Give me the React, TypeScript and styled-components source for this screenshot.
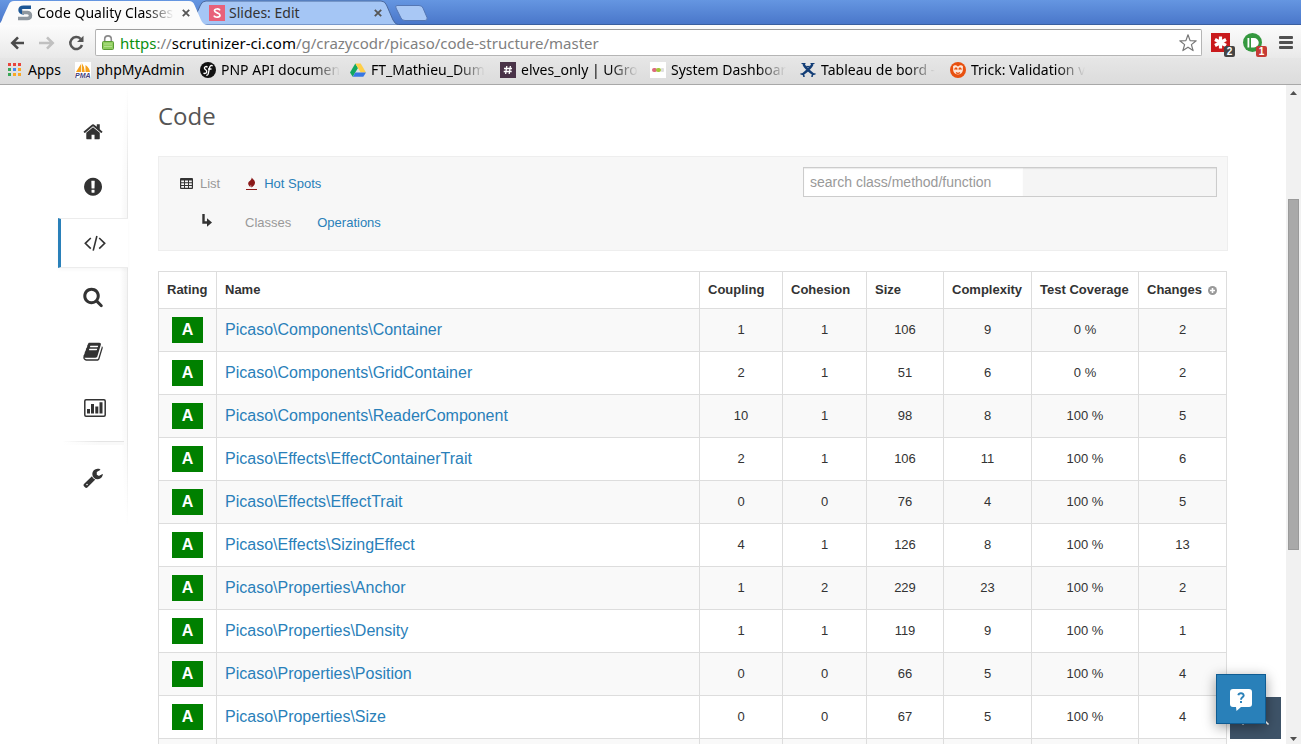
import React from 'react';
import styled, { createGlobalStyle, css } from 'styled-components';

const UI_FONT = '"Noto Sans", "Open Sans", sans-serif';
const BODY_FONT = '"Liberation Sans", Arial, sans-serif';

const GlobalStyle = createGlobalStyle`
  *, *::before, *::after { box-sizing: border-box; }
  body { margin: 0; background: #fff; color: #333; font: 13px/20px ${BODY_FONT}; overflow: hidden; }
  button, input { font: inherit; color: inherit; }
  button { padding: 0; border: 0; background: none; cursor: pointer; }
  a { text-decoration: none; color: inherit; }
  svg { display: block; flex: none; }
`;

/* ---------- browser window ---------- */

const Window = styled.div`
  display: flex;
  flex-direction: column;
  height: 100vh;
`;

const TabStrip = styled.div`
  display: flex;
  height: 25px;
  padding-left: 4px;
  background: linear-gradient(#6596e1, #4a77ca);
  border-bottom: 1px solid #3a5f9f;
  flex: none;
`;

const Tab = styled.div<{ $active?: boolean }>`
  position: relative;
  z-index: ${(p) => (p.$active ? 2 : 1)};
  display: flex;
  align-items: center;
  gap: 4px;
  width: 192px;
  height: 25px;
  padding: 0 2px 0 13px;
  font: 14px/24px ${UI_FONT};
  color: ${(p) => (p.$active ? '#000' : '#333')};
`;

const TabShape = styled.svg`
  position: absolute;
  z-index: -1;
  left: -8px;
  top: 0;
`;

const fade = css`
  overflow: hidden;
  white-space: nowrap;
  mask-image: linear-gradient(90deg, #000 calc(100% - 28px), transparent);
`;

const TabTitle = styled.span<{ $fade?: boolean }>`
  flex: 1;
  min-width: 0;
  white-space: nowrap;
  ${(p) => p.$fade && fade}
`;

const CloseButton = styled.button`
  display: grid;
  place-items: center;
  width: 16px;
  height: 16px;
  color: #555;
`;

const NewTab = styled.button`
  margin: 5px 0 0 6px;
  height: 16px;
`;

const Toolbar = styled.div`
  display: flex;
  align-items: center;
  height: 33px;
  padding: 2px 8px 0;
  background: linear-gradient(#fcfcfc, #e9e9e9);
  flex: none;
`;

const ToolButton = styled.button`
  display: grid;
  place-items: center;
  width: 29px;
  height: 24px;
  justify-items: start;
`;

const AddressBar = styled.div`
  display: flex;
  align-items: center;
  flex: 1;
  min-width: 0;
  height: 27px;
  padding: 0 4px 0 6px;
  gap: 6px;
  background: #fff;
  border: 1px solid #b5b5b5;
  border-top-color: #9c9c9c;
  border-radius: 2px;
`;

const Url = styled.div`
  flex: 1;
  min-width: 0;
  overflow: hidden;
  white-space: nowrap;
  font: 15px/24px ${UI_FONT};
  color: #808080;
  b { font-weight: normal; color: #000; }
  i { font-style: normal; color: #0a9010; }
`;

const Extensions = styled.div`
  display: flex;
  align-items: center;
  gap: 12px;
  padding-left: 9px;
  svg { overflow: visible; }
`;

const Bookmarks = styled.nav`
  display: flex;
  height: 27px;
  padding-left: 7px;
  background: linear-gradient(#e6e6e6, #dcdcdc);
  border-bottom: 1px solid #a8a8a8;
  flex: none;
`;

const Bookmark = styled.a<{ $width: number }>`
  display: flex;
  align-items: center;
  gap: 5px;
  width: ${(p) => p.$width}px;
  padding: 0 8px 3px 0;
  font: 14px/22px ${UI_FONT};
  color: #000;
`;

const BookmarkLabel = styled.span<{ $fade?: boolean }>`
  white-space: nowrap;
  ${(p) => p.$fade && fade}
`;

const Viewport = styled.div`
  position: relative;
  display: flex;
  flex: 1;
  min-height: 0;
`;

const Scroller = styled.div`
  flex: 1;
  min-width: 0;
  overflow: hidden;
`;

const ScrollTrack = styled.div`
  display: flex;
  flex-direction: column;
  align-items: center;
  width: 15px;
  padding: 6px 0 3px;
  background: #f1f1f1;
`;

const ScrollThumb = styled.div`
  width: 11px;
  height: 54%;
  margin: 104px 0 auto;
  background: #a9a9a9;
  border: 1px solid #9a9a9a;
`;

/* ---------- page ---------- */

const Page = styled.div`
  display: flex;
  max-width: 1170px;
  margin: 0 auto;
  align-items: flex-start;
`;

const SideNav = styled.nav`
  display: flex;
  flex-direction: column;
  gap: 5px;
  width: 70px;
  height: 440px;
  padding-top: 23px;
  flex: none;
  border-right: 1px solid;
  border-image: linear-gradient(transparent, #e8e8e8 20%, #e8e8e8 80%, transparent) 1;
  background: radial-gradient(ellipse 7px 50% at 100% 50%, #f3f3f3, #fff);
`;

const NavItem = styled.a<{ $active?: boolean }>`
  display: flex;
  align-items: center;
  height: 50px;
  padding-left: 25px;
  color: #333;
  ${(p) =>
    p.$active &&
    css`
      margin-right: -1px;
      padding-left: 23px;
      background: #fff;
      border: solid #ececec;
      border-width: 1px 0;
      border-left: 3px solid #2a80b9;
      box-shadow: 0 2px 4px rgba(0, 0, 0, 0.03);
    `}
`;

const NavDivider = styled.hr`
  width: 62px;
  height: 4px;
  margin: 3px 0 4px 4px;
  border: 0;
  background:
    linear-gradient(90deg, transparent, #e4e4e4 60%) top / 100% 1px no-repeat,
    linear-gradient(90deg, transparent, #f9f9f9 60%);
`;

const Main = styled.main`
  flex: 1;
  min-width: 0;
  padding: 16px 0 0 30px;
`;

const Title = styled.h1`
  margin: 0 0 25px;
  font: 24px/30px "Open Sans", sans-serif;
  color: #555;
`;

const Panel = styled.section`
  display: flex;
  justify-content: space-between;
  align-items: flex-start;
  margin-bottom: 20px;
  padding: 10px;
  background: #f7f7f7;
  border: 1px solid #eee;
`;

const Filters = styled.div`
  display: flex;
  flex-direction: column;
  gap: 19px;
  padding: 7px 0 7px 11px;
`;

const FilterRow = styled.div<{ $sub?: boolean }>`
  display: flex;
  align-items: center;
  gap: 26px;
  padding-left: ${(p) => (p.$sub ? 22 : 0)}px;
  svg:first-child { margin-right: ${(p) => (p.$sub ? 6 : 0)}px; }
`;

const FilterLink = styled.a<{ $current?: boolean }>`
  display: flex;
  align-items: center;
  gap: 7px;
  color: ${(p) => (p.$current ? '#999' : '#2980b9')};
`;

const SearchBox = styled.form`
  display: flex;
  width: 414px;
  height: 30px;
  border: 1px solid #ccc;
  box-shadow: inset 0 1px 1px rgba(0, 0, 0, 0.08);
  background: #f5f5f5;
`;

const SearchInput = styled.input`
  width: 219px;
  padding: 0 6px;
  border: 0;
  outline: 0;
  background: #fff;
  box-shadow: inset 0 1px 1px rgba(0, 0, 0, 0.08);
  font-size: 14px;
  &::placeholder { color: #999; opacity: 1; }
`;

const TableWrap = styled.div`
  padding-right: 1px;
`;

const Table = styled.table`
  width: 100%;
  table-layout: fixed;
  border-collapse: collapse;
`;

const Head = styled.th`
  height: 37px;
  padding: 0 8px;
  border: 1px solid #ddd;
  text-align: left;
  white-space: nowrap;
`;

const HeadSort = styled.span`
  display: flex;
  align-items: center;
  gap: 6px;
`;

const Row = styled.tr`
  &:nth-child(odd) { background: #f9f9f9; }
`;

const Cell = styled.td<{ $left?: boolean }>`
  height: 43px;
  padding: 0 8px;
  border: 1px solid #ddd;
  text-align: ${(p) => (p.$left ? 'left' : 'center')};
`;

const Grade = styled.span`
  display: inline-block;
  width: 31px;
  background: #008000;
  color: #fff;
  font-weight: bold;
  font-size: 16px;
  line-height: 26px;
  vertical-align: middle;
`;

const ClassLink = styled.a`
  font-size: 16px;
  color: #2980b9;
`;

const ToTop = styled.button`
  position: absolute;
  right: 20px;
  bottom: 5px;
  width: 51px;
  height: 42px;
  background: #3e5368;
`;

const HelpButton = styled.button`
  position: absolute;
  right: 35px;
  bottom: 20px;
  display: grid;
  place-items: center;
  width: 50px;
  height: 50px;
  background: #2980b9;
  border: 1px solid #0f5c92;
  box-shadow: 0 3px 12px rgba(0, 0, 0, 0.4);
`;

/* ---------- icons ---------- */

const paths = {
  home: 'M1472 992v480q0 26-19 45t-45 19h-384v-384h-256v384h-384q-26 0-45-19t-19-45v-480q0-1 .5-3t.5-3l575-474 575 474q1 2 1 6zm223-69l-62 74q-8 9-21 11h-3q-13 0-21-7l-692-577-692 577q-12 8-24 7-13-2-21-11l-62-74q-8-10-7-23.5t11-21.5l719-599q32-26 76-26t76 26l244 204v-195q0-14 9-23t23-9h192q14 0 23 9t9 23v408l219 182q10 8 11 21.5t-7 23.5z',
  alert: 'M896 128q209 0 385.5 103t279.5 279.5 103 385.5-103 385.5-279.5 279.5-385.5 103-385.5-103-279.5-279.5-103-385.5 103-385.5 279.5-279.5 385.5-103zm128 1247v-190q0-14-9-23.5t-22-9.5h-192q-13 0-23 10t-10 23v190q0 13 10 23t23 10h192q13 0 22-9.5t9-23.5zm-2-344l18-621q0-12-10-18-10-8-24-8h-220q-14 0-24 8-10 6-10 18l17 621q0 10 10 17.5t24 7.5h185q14 0 23.5-7.5t10.5-17.5z',
  search: 'M1216 832q0-185-131.5-316.5t-316.5-131.5-316.5 131.5-131.5 316.5 131.5 316.5 316.5 131.5 316.5-131.5 131.5-316.5zm512 832q0 52-38 90t-90 38q-54 0-90-38l-343-342q-179 124-399 124-143 0-273.5-55.5t-225-150-150-225-55.5-273.5 55.5-273.5 150-225 225-150 273.5-55.5 273.5 55.5 225 150 150 225 55.5 273.5q0 220-124 399l343 343q37 37 37 90z',
  book: 'M1703 478q40 57 18 129l-275 906q-19 64-76.5 107.5t-122.5 43.5h-923q-77 0-148.5-53.5t-99.5-131.5q-24-67-2-127 0-4 3-27t4-37q1-8-3-21.5t-3-19.5q2-11 8-21t16.5-23.5 16.5-23.5q23-38 45-91.5t30-91.5q3-10 .5-30t-.5-28q3-11 17-28t17-23q21-36 42-92t25-90q1-9-2.500-32t.5-28q4-13 22-30.5t22-22.5q19-26 42.5-84.5t27.5-96.5q1-8-3-25.5t-2-26.5q2-8 9-18t18-23 17-21q8-12 16.5-30.5t15-35 16-36 19.5-32 26.5-23.5 36-11.5 47.5 5.5l-1 3q38-9 51-9h761q74 0 114 56t18 130l-274 906q-36 119-71.5 153.5t-128.5 34.5h-869q-27 0-38 15-11 16-1 43 24 70 144 70h923q29 0 56-15.5t35-41.5l300-987q7-22 5-57 38 15 59 43zm-1064 2q-4 13 2 22.5t20 9.5h608q13 0 25.5-9.5t16.5-22.5l21-64q4-13-2-22.5t-20-9.5h-608q-13 0-25.5 9.5t-16.5 22.5zm-83 256q-4 13 2 22.5t20 9.5h608q13 0 25.5-9.5t16.5-22.5l21-64q4-13-2-22.5t-20-9.5h-608q-13 0-25.5 9.5t-16.5 22.5z',
  wrench: 'M448 1472q0-26-19-45t-45-19-45 19-19 45 19 45 45 19 45-19 19-45zm644-420l-682 682q-37 37-90 37-52 0-91-37l-106-108q-38-36-38-90 0-53 38-91l681-681q39 98 114.5 173.5t173.5 114.5zm634-435q0 39-23 106-47 134-164.5 217.5t-258.5 83.5q-185 0-316.5-131.5t-131.5-316.5 131.5-316.5 316.5-131.5q58 0 121.5 16.5t107.5 46.5q16 11 16 28t-16 28l-293 169v224l193 107q5-3 79-48.5t135.5-81 70.5-35.5q15 0 23.5 10t8.5 25z',
};

const Glyph = ({ name }: { name: keyof typeof paths }) => (
  <svg width="22" height="22" viewBox="40 70 1877 1877" fill="currentColor">
    <path d={paths[name]} />
  </svg>
);

const CodeIcon = () => (
  <svg width="22" height="16" viewBox="0 0 22 16" fill="none" stroke="#333" strokeWidth="1.6">
    <path d="M6.8 3 1.3 8.300l5.500 5.300M15.200 3l5.500 5.300-5.500 5.300M12.900 1 9.200 15.600" />
  </svg>
);

const ChartIcon = () => (
  <svg width="23" height="18" viewBox="-1 0 23 18">
    <rect x=".8" y=".8" width="20.4" height="16.4" rx="1.2" fill="none" stroke="#333" strokeWidth="1.5" />
    <path d="M3 10h3v4.500H3zM7 5h3v9.500H7zM11.300 7.500h3v7h-3zM15.500 3.200h3v11.300h-3z" fill="#333" />
  </svg>
);

const ListIcon = () => (
  <svg width="13" height="12" viewBox="0 0 13 12">
    <rect width="13" height="11" rx="1" fill="#333" />
    <path d="M1.200 2.500h2.800v1.800H1.200zM5 2.500h3v1.800H5zM9 2.500h2.800v1.800H9zM1.200 5.200h2.800V7H1.200zM5 5.200h3V7H5zM9 5.200h2.800V7H9zM1.200 8h2.800v1.800H1.200zM5 8h3v1.800H5zM9 8h2.800v1.800H9z" fill="#f7f7f7" />
  </svg>
);

const FireIcon = () => (
  <svg width="11" height="14" viewBox="0 0 11 14" fill="#8b1a1a">
    <path d="M0 12h11v1H0zM5.700 0C5.800 1.800 9.200 3 9 5.800c0 2.200-1.700 3.800-4 4.700.5-1 .4-1.700-.2-2.400-.4.800-.3 1.400 0 2.200C3 9 2 7.800 2.200 6 2.500 4 6 3.300 5.700 0z" />
  </svg>
);

const SubArrow = () => (
  <svg width="11" height="19" viewBox="0 0 11 19">
    <path d="M1.500 0v8.500H6" fill="none" stroke="#333" strokeWidth="2.400" />
    <path d="M5 4.300 10 8.500 5 12.800z" fill="#333" />
  </svg>
);

const ArrowIcon = ({ color, flip }: { color: string; flip?: boolean }) => (
  <svg width="16" height="14" viewBox="0 0 16 14" fill="none" stroke={color} strokeWidth="2.600">
    <path d={flip ? 'M1 7h13M8 1.300 13.700 7 8 12.700' : 'M17 7H4M10 1.300 4.300 7 10 12.700'} />
  </svg>
);

const CloseIcon = () => (
  <svg width="8" height="8" viewBox="0 0 8 8" stroke="currentColor" strokeWidth="1.800">
    <path d="M.8.800l6.400 6.400M7.200.800.800 7.200" />
  </svg>
);

const icons: Record<string, React.ReactNode> = {
  apps: (
    <svg width="16" height="16" viewBox="0 0 16 16">
      <path d="M1 1h3v3H1zM6 1h3v3H6zM11 1h3v3h-3z" fill="#e8453c" />
      <path d="M1 6h3v3H1zM1 11h3v3H1z" fill="#3aa757" />
      <path d="M6 6h3v3H6z" fill="#4688f1" />
      <path d="M11 6h3v3h-3zM6 11h3v3H6zM11 11h3v3h-3z" fill="#f9a825" />
    </svg>
  ),
  pma: (
    <svg width="16" height="16" viewBox="0 0 16 16">
      <rect width="16" height="16" fill="#fff" />
      <path d="M1 10 6 2v8zM6.800 10V1q3 4 3 9zM10.500 10V3q4 3 4.500 7z" fill="#f5a11c" />
      <text x="0" y="16" fontFamily="Liberation Sans" fontWeight="bold" fontStyle="italic" fontSize="7" fill="#44407c">PMA</text>
    </svg>
  ),
  symfony: (
    <svg width="16" height="16" viewBox="0 0 16 16">
      <circle cx="8" cy="8" r="8" fill="#111" />
      <path d="M7.500 5.200C6 3.700 4 5 4.500 6.500s2.700 1.300 2.200 3.400-2.700 1.800-3 .8M12.500 4.200c-.8-1.400-2.600-.8-3 1.600l-1.200 5.700c-.3 1.600-1.300 2-2 1.400M8 7h3.500" stroke="#fff" strokeWidth="1.300" fill="none" />
    </svg>
  ),
  drive: (
    <svg width="16" height="16" viewBox="0 0 16 16">
      <path d="M5.300 1.500 0 10.500l2.700 4.300L8 6z" fill="#11a861" />
      <path d="M5.300 1.500h5.400l5.300 9h-5.300z" fill="#ffcf48" />
      <path d="M5.400 10.500H16l-2.700 4.300H2.700z" fill="#3777e3" />
    </svg>
  ),
  hash: (
    <svg width="16" height="16" viewBox="0 0 16 16">
      <rect width="16" height="16" fill="#4a3348" />
      <path d="M6.800 4 5.600 12M10.400 4l-1.200 8M4 6.500h8M3.700 9.500h8" stroke="#fff" strokeWidth="1.300" />
    </svg>
  ),
  system: (
    <svg width="16" height="16" viewBox="0 0 16 16">
      <rect width="16" height="16" fill="#fff" />
      <rect x="2" y="6" width="5" height="4" rx="2" fill="#dd6a7c" />
      <rect x="6" y="6" width="5" height="4" rx="2" fill="#a4c639" />
      <rect x="11" y="6" width="3" height="4" rx="1" fill="#dedede" />
    </svg>
  ),
  jira: (
    <svg width="16" height="16" viewBox="0 0 16 16" fill="none" stroke="#123d76">
      <path d="M3.500 2C5 6 9 9 13.500 12.500M12.500 2C11 6 7 9 2.500 12.500" strokeWidth="2.400" />
      <path d="M.5 12q3.500-.5 3.500 3M15.500 12q-3.500-.5-3.500 3" strokeWidth="1.600" />
      <path d="M1.500 1.500h4M10.500 1.500h4M6.500 4q1.500 1.500 3 0" strokeWidth="1.200" />
    </svg>
  ),
  trick: (
    <svg width="16" height="16" viewBox="0 0 16 16">
      <circle cx="8" cy="8" r="8" fill="#e8500f" />
      <path d="M3 4.500c2-2 3-1 5 0 2-1 3-2 5 0-.5 2 .5 4-1 6-1.500 2.500-6.500 2.500-8 0-1.500-2-.5-4-1-6z" fill="#fde6d8" />
      <path d="M4.500 7.500 6 6l1.300 1.500M8.700 7.500 10 6l1.500 1.500M6 10.500q2 1.800 4 0" stroke="#e8500f" strokeWidth="1.300" fill="none" />
    </svg>
  ),
};

/* ---------- data ---------- */

const bookmarks: [string, string, number][] = [
  ['apps', 'Apps', 68],
  ['pma', 'phpMyAdmin', 125],
  ['symfony', 'PNP API documen', 150],
  ['drive', 'FT_Mathieu_Dum', 150],
  ['hash', 'elves_only | UGro', 150],
  ['system', 'System Dashboar', 150],
  ['jira', 'Tableau de bord -', 150],
  ['trick', 'Trick: Validation v', 151],
];

const columns: [string, number | undefined][] = [
  ['Rating', 58],
  ['Name', undefined],
  ['Coupling', 83],
  ['Cohesion', 84],
  ['Size', 77],
  ['Complexity', 88],
  ['Test Coverage', 107],
  ['Changes', 88],
];

const rows: (string | number)[][] = [
  ['Picaso\\Components\\Container', 1, 1, 106, 9, '0 %', 2],
  ['Picaso\\Components\\GridContainer', 2, 1, 51, 6, '0 %', 2],
  ['Picaso\\Components\\ReaderComponent', 10, 1, 98, 8, '100 %', 5],
  ['Picaso\\Effects\\EffectContainerTrait', 2, 1, 106, 11, '100 %', 6],
  ['Picaso\\Effects\\EffectTrait', 0, 0, 76, 4, '100 %', 5],
  ['Picaso\\Effects\\SizingEffect', 4, 1, 126, 8, '100 %', 13],
  ['Picaso\\Properties\\Anchor', 1, 2, 229, 23, '100 %', 2],
  ['Picaso\\Properties\\Density', 1, 1, 119, 9, '100 %', 1],
  ['Picaso\\Properties\\Position', 0, 0, 66, 5, '100 %', 4],
  ['Picaso\\Properties\\Size', 0, 0, 67, 5, '100 %', 4],
];

const Col = styled.col<{ $width?: number }>`
  width: ${(p) => (p.$width ? `${p.$width}px` : 'auto')};
`;

/* ---------- sections ---------- */

const TabBackground = ({ active }: { active?: boolean }) => (
  <TabShape width="214" height="25" viewBox="0 0 214 25">
    <path
      d="M1 25C5 24 5.500 21 7 17L12.500 5Q14 1 18 1H193Q197 1 198.500 5L205 20Q207 24.500 211 25z"
      fill={active ? '#fbfbfb' : '#a5c6f5'}
      stroke={active ? 'none' : '#48689e'}
    />
  </TabShape>
);

const Browser = () => (
  <>
    <TabStrip>
      <Tab $active>
        <TabBackground active />
        <svg width="16" height="16" viewBox="0 0 16 16" fill="none" strokeWidth="3.400">
          <path d="M14 2.200H6.500Q3 2.200 3 5q0 2.500 4 3" stroke="#1d5796" />
          <path d="M5 7.500h5.500Q13.500 8 13.500 10.500q0 3-3.500 3H1" stroke="#8e979f" />
        </svg>
        <TabTitle $fade>Code Quality Classes</TabTitle>
        <CloseButton aria-label="Close tab"><CloseIcon /></CloseButton>
      </Tab>
      <Tab>
        <TabBackground />
        <svg width="16" height="16" viewBox="0 0 16 16">
          <rect width="16" height="16" fill="#e8617a" />
          <path d="M11 5.300C10 3.400 5.500 3.500 5.500 5.800S11 7.700 11 10.200 6 12.900 4.800 10.700" fill="none" stroke="#fff" strokeWidth="1.700" />
        </svg>
        <TabTitle>Slides: Edit</TabTitle>
        <CloseButton aria-label="Close tab"><CloseIcon /></CloseButton>
      </Tab>
      <NewTab aria-label="New tab">
        <svg width="34" height="16" viewBox="0 0 34 16">
          <path d="M3 .5h22q3 0 4 2.500l4 9.500q1 3-2 3H11q-3 0-4-2.500L2 3Q1 .5 3 .5z" fill="#a9c8f5" stroke="#5577b4" />
        </svg>
      </NewTab>
    </TabStrip>
    <Toolbar>
      <ToolButton aria-label="Back"><ArrowIcon color="#4a4a4a" /></ToolButton>
      <ToolButton aria-label="Forward">
        <svg width="18" height="14" viewBox="-2 0 18 14" fill="none" stroke="#c0c0c0" strokeWidth="2.600">
          <path d="M0 7h14M8 1.300 13.700 7 8 12.700" />
        </svg>
      </ToolButton>
      <ToolButton aria-label="Reload">
        <svg width="18" height="16" viewBox="-2 0 18 16">
          <path d="M12.600 3.800A6 6 0 1 0 14 10" fill="none" stroke="#555" strokeWidth="2.500" />
          <path d="M15.500.8V7H9z" fill="#555" />
        </svg>
      </ToolButton>
      <AddressBar>
        <svg width="12" height="15" viewBox="0 0 12 15">
          <path d="M2.700 7V4.200a3.300 3.300 0 0 1 6.600 0V7" fill="none" stroke="#8a8a8a" strokeWidth="1.600" />
          <rect x=".5" y="6.500" width="11" height="8" rx="1" fill="#8fce5f" stroke="#5a9a35" />
          <path d="M2 9h8M2 11.500h8" stroke="#b4e08e" />
        </svg>
        <Url><i>https</i>://<b>scrutinizer-ci.com</b>/g/crazycodr/picaso/code-structure/master</Url>
        <svg width="18" height="18" viewBox="0 0 18 18">
          <path d="m9 .8 2.100 5.800 6.100.2-4.800 3.800 1.700 6L9 13.200l-5.100 3.400 1.700-6L.8 6.800l6.100-.2z" fill="#fff" stroke="#777" strokeWidth="1.200" strokeLinejoin="round" />
        </svg>
      </AddressBar>
      <Extensions>
        <svg width="20" height="19" viewBox="0 0 20 19">
          <path d="M0 0h19v19H0z" fill="#c91a1c" />
          <path d="M9.500 3.500v12M4 6.500l11 6M15 6.500l-11 6" stroke="#fff" strokeWidth="3.200" />
          <rect x="13" y="13" width="11" height="11" rx="2" fill="#444" />
          <text x="18.500" y="22" textAnchor="middle" fontFamily="Liberation Sans" fontWeight="bold" fontSize="10" fill="#fff">2</text>
        </svg>
        <svg width="24" height="19" viewBox="0 0 24 19">
          <circle cx="9.500" cy="9.500" r="9.500" fill="#35983f" />
          <path d="M4.500 5v9.500h1.800V5zM8 5v9.500h3a4.700 4.700 0 0 0 0-9.500z" fill="#fff" />
          <rect x="13" y="13" width="11" height="11" rx="2" fill="#c63a35" />
          <text x="18.500" y="22" textAnchor="middle" fontFamily="Liberation Sans" fontWeight="bold" fontSize="10" fill="#fff">1</text>
        </svg>
        <svg width="14" height="13" viewBox="0 0 14 13" fill="#505050">
          <rect width="14" height="3" rx="1" /><rect y="5" width="14" height="3" rx="1" /><rect y="10" width="14" height="3" rx="1" />
        </svg>
      </Extensions>
    </Toolbar>
    <Bookmarks>
      {bookmarks.map(([icon, label, width], i) => (
        <Bookmark key={label} href="#" $width={width}>
          {icons[icon]}
          <BookmarkLabel $fade={i > 1}>{label}</BookmarkLabel>
        </Bookmark>
      ))}
    </Bookmarks>
  </>
);

const ClassTable = () => (
  <TableWrap>
    <Table>
      <colgroup>
        {columns.map(([label, width]) => <Col key={label} $width={width} />)}
      </colgroup>
      <thead>
        <tr>
          {columns.map(([label]) => (
            <Head key={label} scope="col">
              <HeadSort>
                {label}
                {label === 'Changes' && (
                  <svg width="9" height="9" viewBox="0 0 9 9">
                    <circle cx="4.500" cy="4.500" r="4.500" fill="#999" />
                    <path d="M4.500 2v5M2 4.500h5" stroke="#fff" strokeWidth="1.600" />
                  </svg>
                )}
              </HeadSort>
            </Head>
          ))}
        </tr>
      </thead>
      <tbody>
        {rows.map(([name, ...values]) => (
          <Row key={name}>
            <Cell><Grade>A</Grade></Cell>
            <Cell $left><ClassLink href="#">{name}</ClassLink></Cell>
            {values.map((value, i) => <Cell key={i}>{value}</Cell>)}
          </Row>
        ))}
        <Row>
          <Cell /><Cell /><Cell /><Cell /><Cell /><Cell /><Cell /><Cell />
        </Row>
      </tbody>
    </Table>
  </TableWrap>
);

export default function App() {
  return (
    <Window>
      <GlobalStyle />
      <Browser />
      <Viewport>
        <Scroller>
          <Page>
            <SideNav>
              <NavItem href="#" aria-label="Home"><Glyph name="home" /></NavItem>
              <NavItem href="#" aria-label="Issues"><Glyph name="alert" /></NavItem>
              <NavItem href="#" aria-label="Code" $active><CodeIcon /></NavItem>
              <NavItem href="#" aria-label="Search"><Glyph name="search" /></NavItem>
              <NavItem href="#" aria-label="Reports"><Glyph name="book" /></NavItem>
              <NavItem href="#" aria-label="Statistics"><ChartIcon /></NavItem>
              <NavDivider />
              <NavItem href="#" aria-label="Settings"><Glyph name="wrench" /></NavItem>
            </SideNav>
            <Main>
              <Title>Code</Title>
              <Panel>
                <Filters>
                  <FilterRow>
                    <FilterLink href="#" $current><ListIcon />List</FilterLink>
                    <FilterLink href="#"><FireIcon />Hot Spots</FilterLink>
                  </FilterRow>
                  <FilterRow $sub>
                    <SubArrow />
                    <FilterLink href="#" $current>Classes</FilterLink>
                    <FilterLink href="#">Operations</FilterLink>
                  </FilterRow>
                </Filters>
                <SearchBox>
                  <SearchInput type="text" aria-label="Search" placeholder="search class/method/function" />
                </SearchBox>
              </Panel>
              <ClassTable />
            </Main>
          </Page>
        </Scroller>
        <ScrollTrack>
          <svg width="7" height="4" viewBox="0 0 7 4"><path d="M0 4 3.500 0 7 4z" fill="#505050" /></svg>
          <ScrollThumb />
          <svg width="7" height="4" viewBox="0 0 7 4"><path d="M0 0h7L3.500 4z" fill="#505050" /></svg>
        </ScrollTrack>
        <ToTop aria-label="Back to top">
          <svg width="51" height="42" viewBox="0 0 51 42" fill="none" stroke="#fff" strokeWidth="1.500">
            <path d="m12.500 27.500 13-13 13 13" />
          </svg>
        </ToTop>
        <HelpButton aria-label="Help">
          <svg width="22" height="23" viewBox="0 0 22 23">
            <path d="M3 1h16q3 0 3 3v12q0 3-3 3h-8l-4.500 4-.5-4H3q-3 0-3-3V4q0-3 3-3z" fill="#fff" />
            <path d="M8.300 7.200q.4-2 2.700-2t2.700 2.200c0 1.900-2.700 2-2.700 4.300M11 13v2" fill="none" stroke="#2980b9" strokeWidth="1.900" />
          </svg>
        </HelpButton>
      </Viewport>
    </Window>
  );
}
